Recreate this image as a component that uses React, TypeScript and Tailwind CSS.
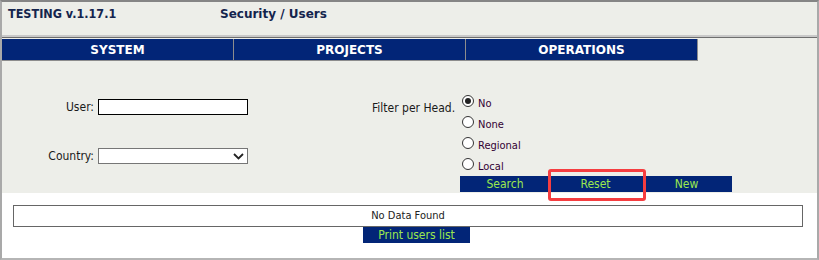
import React from 'react';

const cond = "font-['DejaVu_Sans_Condensed','DejaVu_Sans',sans-serif]";
const wide = "font-['DejaVu_Sans','Liberation_Sans',sans-serif]";

const navItems = ['SYSTEM', 'PROJECTS', 'OPERATIONS'];
const radios = ['No', 'None', 'Regional', 'Local'];

const Radio = ({ label, checked }: { label: string; checked?: boolean }) => (
  <div className="flex h-[21px] items-start pl-[2px] pt-[4px]">
    <span className="flex h-[12px] w-[12px] items-center justify-center rounded-full border border-[#333] bg-white">
      {checked && <span className="h-[6px] w-[6px] rounded-full bg-[#222]" />}
    </span>
    <span className="ml-[4px] mt-[3px] text-[11px] leading-[12px] text-[#330033]">{label}</span>
  </div>
);

export default function App() {
  return (
    <div className={`h-[260px] w-[819px] overflow-hidden bg-white text-[#1a1a1a] ${cond}`}>
      <div className="flex h-full flex-col border-x-2 border-b-2 border-t-2 border-x-[#a9a9a9] border-b-[#b5b5b5] border-t-[#858585]">
        {/* header */}
        <div className="flex h-[33px] items-start bg-[#edeee9] pl-[6px] pt-[3px] text-[#14244d]">
          <span className="w-[212px] text-[12.5px] font-bold">TESTING v.1.17.1</span>
          <span className={`text-[12px] font-bold ${wide}`}>Security / Users</span>
        </div>
        <div className="h-[2px] bg-[#c9c9c9]" />
        <div className="h-[1px] bg-[#6e6e6e]" />

        <div className="bg-[#edeee9]">
          {/* nav */}
          <div className="flex pt-[1px]">
            {navItems.map((n) => (
              <div
                key={n}
                className={`flex h-[22px] w-[232px] items-center justify-center border-b border-r border-[#8d8d8d] bg-[#022577] text-[12px] font-bold text-white ${wide}`}
              >
                {n}
              </div>
            ))}
          </div>

          {/* form */}
          <div className="flex h-[132px]">
            <div className="flex w-[370px] flex-col pt-[37px]">
              <div className="flex items-center">
                <span className="w-[92px] text-right text-[12px]">User:</span>
                <input className="ml-[4px] h-[16px] w-[150px] border border-black bg-white outline-none" />
              </div>
              <div className="mt-[31px] flex items-center">
                <span className="w-[92px] text-right text-[12px]">Country:</span>
                <div className="ml-[4px] flex h-[16px] w-[150px] items-center justify-end border border-[#767676] bg-white pr-[3px]">
                  <svg width="11" height="7" viewBox="0 0 11 7" fill="none">
                    <path d="M1 1l4.5 4.5L10 1" stroke="#222" strokeWidth="1.8" />
                  </svg>
                </div>
              </div>
            </div>
            <div className="flex">
              <span className="w-[88px] pt-[40px] text-[12px] leading-[14px]">Filter per Head.</span>
              <div className="flex flex-col pt-[30px]">
                <Radio label="No" checked />
                {radios.slice(1).map((r) => (
                  <Radio key={r} label={r} />
                ))}
                <div className="relative mt-[1px] flex h-[16px] w-[272px] bg-[#022577] text-[12px] text-[#9be84e]">
                  <span className="flex w-[90px] items-center justify-center">Search</span>
                  <span className="flex w-[91px] items-center justify-center">Reset</span>
                  <span className="flex w-[91px] items-center justify-center">New</span>
                  <div className="absolute left-[88px] top-[-7px] h-[32px] w-[98px] rounded-[3px] border-[3px] border-[#f53d40]" />
                </div>
              </div>
            </div>
          </div>
        </div>

        {/* results */}
        <div className="flex flex-col pt-[12px]">
          <div className="ml-[11px] flex h-[22px] w-[790px] items-center justify-center border border-[#666] text-[11px] text-[#222]">
            No Data Found
          </div>
          <div className="ml-[361px] flex h-[16px] w-[107px] items-center justify-center bg-[#022577] text-[12px] text-[#9be84e]">
            Print users list
          </div>
        </div>
      </div>
    </div>
  );
}
